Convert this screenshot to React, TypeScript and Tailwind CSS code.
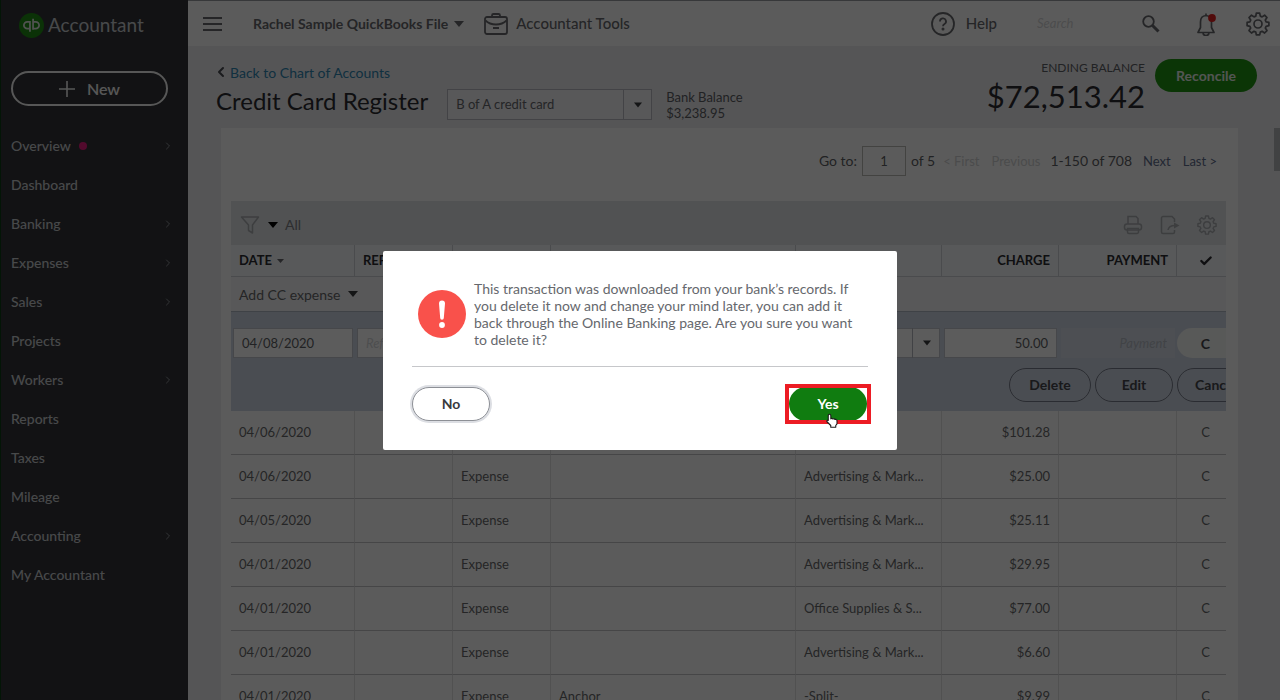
import type { ReactNode } from "react";
import { Check, ChevronLeft, ChevronRight } from "lucide-react";

const navItems = [
  { label: "Overview", dot: true, more: true },
  { label: "Dashboard" },
  { label: "Banking", more: true },
  { label: "Expenses", more: true },
  { label: "Sales", more: true },
  { label: "Projects" },
  { label: "Workers", more: true },
  { label: "Reports" },
  { label: "Taxes" },
  { label: "Mileage" },
  { label: "Accounting", more: true },
  { label: "My Accountant" },
];

const rows = [
  { date: "04/06/2020", type: "", payee: "", account: "", charge: "$101.28" },
  { date: "04/06/2020", type: "Expense", payee: "", account: "Advertising & Mark...", charge: "$25.00" },
  { date: "04/05/2020", type: "Expense", payee: "", account: "Advertising & Mark...", charge: "$25.11" },
  { date: "04/01/2020", type: "Expense", payee: "", account: "Advertising & Mark...", charge: "$29.95" },
  { date: "04/01/2020", type: "Expense", payee: "", account: "Office Supplies & S...", charge: "$77.00" },
  { date: "04/01/2020", type: "Expense", payee: "", account: "Advertising & Mark...", charge: "$6.60" },
  { date: "04/01/2020", type: "Expense", payee: "Anchor", account: "-Split-", charge: "$9.99" },
];

function Caret({ className = "w-[10px]" }: { className?: string }) {
  return (
    <svg viewBox="0 0 10 6" className={`h-[6px] shrink-0 ${className}`} fill="currentColor">
      <path d="M0 0h10L5 6z" />
    </svg>
  );
}

function Gear({ className = "" }: { className?: string }) {
  return (
    <svg viewBox="0 0 24 24" className={className} fill="none" stroke="currentColor" strokeWidth="1.7" strokeLinejoin="round">
      <path d="M10.3 1.2h3.4l.6 2.9 1.8.8 2.5-1.7 2.4 2.4-1.7 2.5.8 1.8 2.8.5v3.3l-2.8.6-.8 1.8 1.7 2.5-2.4 2.4-2.5-1.7-1.8.8-.6 2.8h-3.4l-.5-2.8-1.8-.8-2.5 1.7L3 18.6l1.7-2.5-.8-1.8-2.8-.6v-3.3l2.8-.5.8-1.8L3 5.6l2.500-2.400L8 4.900l1.800-.8z" />
      <circle cx="12" cy="12" r="4" />
    </svg>
  );
}

function Briefcase() {
  return (
    <svg viewBox="0 0 24 23" className="h-[23px] w-6" fill="none" stroke="currentColor" strokeWidth="1.8" strokeLinejoin="round">
      <rect x="1" y="5" width="22" height="17" rx="2" />
      <path d="M8 5V3.500A1.500 1.500 0 0 1 9.500 2h5A1.500 1.500 0 0 1 16 3.500V5" />
      <path d="M1.500 8.500C4.500 11.500 8 12.500 12 12.500s7.500-1 10.500-4M9 16h6" />
    </svg>
  );
}

function Sidebar() {
  return (
    <aside className="w-[188px] shrink-0 border-l border-[#0b3a12] bg-[#333438] px-[10px] text-[#c6c9ce]">
      <div className="flex h-[51px] items-center gap-1 pl-2">
        <svg viewBox="0 0 24 24" className="h-[25px] w-[25px]" fill="none" stroke="#dfe3df" strokeWidth="1.7">
          <circle cx="12" cy="12" r="12" fill="#1f8c14" stroke="none" />
          <path d="M10.500 8.500H8a3.300 3.300 0 0 0 0 6.600h2.500M10.500 7.700v10.300M13.500 15.100H16a3.300 3.300 0 0 0 0-6.600h-2.500M13.500 16V5.500" />
        </svg>
        <span className="text-[19px] font-normal">Accountant</span>
      </div>
      <button className="mt-5 flex h-[35px] w-[157px] items-center justify-center gap-3 rounded-full border-2 border-[#f0f0f0] text-base font-semibold text-[#f0f0f0]">
        <svg viewBox="0 0 16 16" className="h-4 w-4" stroke="currentColor" strokeWidth="1.6">
          <path d="M8 0v16M0 8h16" />
        </svg>
        New
      </button>
      <nav className="mt-5">
        {navItems.map((item) => (
          <a key={item.label} href="#" className="flex h-[39px] items-center text-[14px] font-medium">
            {item.label}
            {item.dot && <span className="ml-2 h-2 w-2 rounded-full bg-[#e31c7e]" />}
            {item.more && <ChevronRight className="mr-1 ml-auto h-3 w-3 text-[#8d9096]" />}
          </a>
        ))}
      </nav>
    </aside>
  );
}

function TopBar() {
  return (
    <header className="flex h-[46px] shrink-0 items-center border-t border-[#9a9ba0] bg-[#fdfdfb] pr-[10px] pl-[15px] text-[#66686d]">
      <button aria-label="Toggle menu" className="flex w-[19px] flex-col gap-1">
        <span className="h-[2px] bg-current" />
        <span className="h-[2px] bg-current" />
        <span className="h-[2px] bg-current" />
      </button>
      <button className="ml-[31px] flex items-center gap-[6px] text-[14px] font-bold">
        Rachel Sample QuickBooks File
        <Caret />
      </button>
      <a href="#" className="ml-5 flex items-center gap-2 text-[15px] font-medium">
        <Briefcase />
        Accountant Tools
      </a>
      <a href="#" className="ml-auto flex items-center gap-[11px] text-[15px] font-medium">
        <svg viewBox="0 0 24 24" className="h-6 w-6" fill="none" stroke="currentColor" strokeWidth="1.8">
          <circle cx="12" cy="12" r="11" />
          <path d="M9 9.500a3 3 0 1 1 4.500 2.500c-1 .6-1.500 1-1.500 2.200" />
          <circle cx="12" cy="17" r=".6" fill="currentColor" />
        </svg>
        Help
      </a>
      <input
        type="text"
        aria-label="Search"
        placeholder="Search"
        className="ml-10 w-[105px] bg-transparent text-[13px] italic placeholder:text-[#d2d3d6]"
      />
      <button aria-label="Run search">
        <svg viewBox="0 0 18 18" className="h-[18px] w-[18px]" fill="none" stroke="currentColor">
          <circle cx="6.500" cy="6.500" r="5.300" strokeWidth="1.800" />
          <path d="M10.500 10.500l6 6" strokeWidth="3" />
        </svg>
      </button>
      <button aria-label="Notifications" className="ml-9">
        <svg viewBox="0 0 22 24" className="h-6 w-[22px]" fill="none" stroke="currentColor" strokeWidth="1.700" strokeLinejoin="round">
          <path d="M10 3.500C6 3.800 4.500 6.500 4.500 10v5.500L2 20.500h16l-2.500-5V10c0-3.500-1.500-6.200-5.500-6.500zM10 3.500V1.500" />
          <path d="M7 20.500a3 3 0 0 0 6 0" />
          <circle cx="16" cy="6" r="3.900" fill="#e02020" stroke="none" />
        </svg>
      </button>
      <button aria-label="Settings" className="ml-[28px]">
        <Gear className="h-6 w-6" />
      </button>
    </header>
  );
}

function PageHead() {
  return (
    <div className="flex h-[82px] items-start pr-[23px] pl-[28px]">
      <div className="pt-4">
        <a href="#" className="flex h-5 items-center text-[14px] text-[#2f85b0]">
          <ChevronLeft className="mr-px -ml-[3px] h-4 w-4 text-[#4a4c51]" strokeWidth={3} />
          Back to Chart of Accounts
        </a>
        <h1 className="text-[24px] leading-[38px] text-[#2b2c30]">Credit Card Register</h1>
      </div>
      <div className="mt-[43px] ml-[19px] flex items-start">
        <div className="relative">
          <select
            aria-label="Account"
            className="h-[31px] w-[205px] appearance-none border border-[#b9bbc1] bg-white/40 px-2 text-[13px] text-[#66686d]"
          >
            <option>B of A credit card</option>
          </select>
          <span className="pointer-events-none absolute inset-y-0 right-0 flex w-[29px] items-center justify-center border-l border-[#b9bbc1] text-[#393a3d]">
            <Caret className="w-2" />
          </span>
        </div>
        <div className="ml-[14px] text-[13px] leading-4 text-[#5d5f64]">
          <p>Bank Balance</p>
          <p>$3,238.95</p>
        </div>
      </div>
      <div className="ml-auto pt-[14px] text-right">
        <p className="text-[12px] leading-4 text-[#5d5f64]">ENDING BALANCE</p>
        <p className="text-[31px] leading-10 text-[#2b2c30]">$72,513.42</p>
      </div>
      <button className="mt-[13px] ml-[10px] h-[33px] w-[102px] rounded-full bg-[#1f9412] text-[14px] font-bold text-[#e6ebe6]">
        Reconcile
      </button>
    </div>
  );
}

function Pager() {
  return (
    <div className="flex items-center justify-end pt-[18px] pr-[9px] pb-[25px] text-[13px] leading-4 text-[#5d5f64]">
      <label htmlFor="page" className="text-[14px] leading-4">
        Go to:
      </label>
      <input id="page" type="text" defaultValue="1" className="ml-[5px] h-[30px] w-11 border border-[#b9bbb4] text-center" />
      <span className="ml-[5px] text-[14px] leading-4">of 5</span>
      <span className="ml-2 text-[#cfd0d2]">&lt; First</span>
      <span className="ml-3 text-[#cfd0d2]">Previous</span>
      <span className="ml-[10px] text-[14px] leading-4">1-150 of 708</span>
      <a href="#" className="ml-[11px] text-[#5f6c8c]">Next</a>
      <a href="#" className="ml-3 text-[#5f6c8c]">Last &gt;</a>
    </div>
  );
}

function Toolbar() {
  return (
    <div className="flex h-11 items-center bg-[#dfe3e5] px-[9px] pt-1 text-[#a9abb0]">
      <button aria-label="Filter" className="flex items-center gap-2">
        <svg viewBox="0 0 20 20" className="h-5 w-5" fill="none" stroke="currentColor" strokeWidth="1.500" strokeLinejoin="round">
          <path d="M1.500 2h17L12.500 10v8l-4-2.500V10z" />
        </svg>
        <Caret className="w-[10px] text-black" />
      </button>
      <span className="ml-[7px] text-[14px] leading-4 text-[#7c7e84]">All</span>
      <button aria-label="Print" className="ml-auto">
        <svg viewBox="0 0 20 20" className="h-5 w-5" fill="none" stroke="currentColor" strokeWidth="1.500">
          <path d="M5 9V1.500h8l2 2V9" />
          <rect x="1.500" y="9" width="17" height="6" rx="2.500" />
          <path d="M4.500 13.500h11v3.500a1.500 1.500 0 0 1-1.500 1.500H6A1.500 1.500 0 0 1 4.500 17z" />
        </svg>
      </button>
      <button aria-label="Export" className="ml-[17px]">
        <svg viewBox="0 0 20 20" className="h-5 w-5" fill="none" stroke="currentColor" strokeWidth="1.500">
          <path d="M14.500 7V4l-2.500-2.500H3A1.500 1.500 0 0 0 1.500 3v14A1.500 1.500 0 0 0 3 18.500h10a1.500 1.500 0 0 0 1.500-1.500v-2" />
          <path d="M8 15c.5-3 3-4.500 7-4.500" />
          <path d="M14 7.500l5.500 3-5.500 3z" fill="currentColor" stroke="none" />
        </svg>
      </button>
      <button aria-label="Table settings" className="ml-[17px]">
        <Gear className="h-5 w-5" />
      </button>
    </div>
  );
}

function HeadCell({ className = "px-2", children }: { className?: string; children?: ReactNode }) {
  return (
    <th className={`h-8 border-r border-b border-[#cdd0d5] text-[13px] font-bold last:border-r-0 ${className}`}>
      {children}
    </th>
  );
}

function Cell({ className = "px-2", children }: { className?: string; children?: ReactNode }) {
  return (
    <td className={`h-11 border-r border-b border-r-[#dfdfdf] border-b-[#c2c3c5] last:border-r-0 ${className}`}>
      {children}
    </td>
  );
}

const field = "h-[30px] w-full border border-[#c3c6cc] bg-white px-2 text-[#5d5f64]";
const pill = "h-[34px] shrink-0 rounded-full border border-[#767b8a] text-[14px] font-bold text-[#45474d]";

function Register() {
  return (
    <table className="w-full table-fixed border-separate border-spacing-0 text-left text-[13px] text-[#66686b]">
      <colgroup>
        <col className="w-[124px]" />
        <col className="w-[98px]" />
        <col className="w-[98px]" />
        <col />
        <col className="w-[146px]" />
        <col className="w-[117px]" />
        <col className="w-[118px]" />
        <col className="w-[49px]" />
      </colgroup>
      <thead className="bg-[#f4f5f8] text-[#2b2c30]">
        <tr>
          <HeadCell>
            <span className="flex items-center gap-[5px]">
              DATE <Caret className="w-[7px] text-[#66686d]" />
            </span>
          </HeadCell>
          <HeadCell>REF NO.</HeadCell>
          <HeadCell />
          <HeadCell />
          <HeadCell />
          <HeadCell className="px-2 text-right">CHARGE</HeadCell>
          <HeadCell className="px-2 text-right">PAYMENT</HeadCell>
          <HeadCell className="pl-2">
            <Check aria-label="Cleared" className="mx-auto h-[14px] w-[14px]" strokeWidth={4} />
          </HeadCell>
        </tr>
      </thead>
      <tbody>
        <tr>
          <td colSpan={8} className="h-[34px] bg-[#f4f4f5] px-2">
            <button className="flex items-center gap-2 text-[14px]">
              Add CC expense
              <Caret className="w-[10px] text-[#393a3d]" />
            </button>
          </td>
        </tr>
        <tr className="bg-[#ced6e2]">
          <td className="border-t border-[#b0b6c2] px-[2px] pt-4">
            <input aria-label="Date" type="text" defaultValue="04/08/2020" className={field} />
          </td>
          <td className="border-t border-[#b0b6c2] px-[2px] pt-4">
            <input aria-label="Ref no." type="text" placeholder="Ref No." className={`${field} italic placeholder:text-[#d6d7da]`} />
          </td>
          <td className="border-t border-[#b0b6c2]" />
          <td className="border-t border-[#b0b6c2]" />
          <td className="border-t border-[#b0b6c2] px-[2px] pt-4">
            <div className="relative">
              <select aria-label="Category" className={`${field} block appearance-none`}>
                <option>Supplies</option>
              </select>
              <span className="pointer-events-none absolute inset-y-0 right-0 flex w-[28px] items-center justify-center border-l border-[#b4b7be] text-[#393a3d]">
                <Caret className="w-2" />
              </span>
            </div>
          </td>
          <td className="border-t border-[#b0b6c2] px-[2px] pt-4">
            <input aria-label="Charge" type="text" defaultValue="50.00" className={`${field} text-right`} />
          </td>
          <td className="border-t border-[#b0b6c2] px-[2px] pt-4">
            <input
              aria-label="Payment"
              type="text"
              placeholder="Payment"
              disabled
              className="h-[30px] w-full bg-white/15 px-2 text-right italic placeholder:text-[#b4b9c3]"
            />
          </td>
          <td className="border-t border-[#b0b6c2] pt-4">
            <button className="h-[30px] w-full rounded-l-full bg-[#f4f5f4] pl-2 text-[14px] font-bold text-[#45474d]">C</button>
          </td>
        </tr>
        <tr className="bg-[#ced6e2]">
          <td colSpan={8} className="h-[53px] overflow-hidden">
            <div className="-mr-[29px] flex justify-end gap-1">
              <button className={`${pill} w-[82px]`}>Delete</button>
              <button className={`${pill} w-[78px]`}>Edit</button>
              <button className={`${pill} w-[78px]`}>Cancel</button>
            </div>
          </td>
        </tr>
        {rows.map((row, i) => (
          <tr key={i}>
            <Cell>{row.date}</Cell>
            <Cell />
            <Cell>{row.type}</Cell>
            <Cell>{row.payee}</Cell>
            <Cell className="px-2 whitespace-nowrap">{row.account}</Cell>
            <Cell className="px-2 text-right">{row.charge}</Cell>
            <Cell />
            <Cell className="pl-2 text-center">C</Cell>
          </tr>
        ))}
      </tbody>
    </table>
  );
}

function HandCursor() {
  return (
    <svg
      viewBox="0 0 16 18"
      className="pointer-events-none absolute top-[26px] left-[36px] h-[15px] w-[14px]"
      fill="#fff"
      stroke="#1a1a1a"
      strokeWidth="1.300"
      strokeLinejoin="round"
    >
      <path d="M5 1.500c1.200 0 1.600.8 1.600 1.800V7c.8-.8 2-.6 2.500.3.800-.6 2-.4 2.400.5 1-.5 2.500 0 2.500 1.500V13l-1.500 2v2H6.500v-2L2 10.500c-.8-1 .2-2.400 1.500-1.500V3.300c0-1 .4-1.800 1.500-1.800z" />
    </svg>
  );
}

function DeleteDialog() {
  return (
    <div className="fixed inset-0 flex items-center justify-center bg-black/64">
      <div role="dialog" aria-modal="true" aria-label="Delete transaction" className="w-[514px] rounded-[2px] bg-white px-[29px] py-[29px]">
        <div className="flex items-center gap-2 border-b border-[#c6c7ca] pb-[18px] pl-[6px]">
          <svg viewBox="0 0 48 48" className="h-12 w-12 shrink-0">
            <circle cx="24" cy="24" r="24" fill="#f9514b" />
            <path d="M21 13.500a3 3 0 0 1 6 0L25.800 28a1.800 1.800 0 0 1-3.600 0z" fill="#fff" />
            <circle cx="24" cy="35" r="2.900" fill="#fff" />
          </svg>
          <p className="text-[14px] leading-[17px] text-[#66686d]">
            This transaction was downloaded from your bank’s records. If you delete it now and change your mind later,
            you can add it back through the Online Banking page. Are you sure you want to delete it?
          </p>
        </div>
        <div className="mt-5 flex items-center justify-between pr-px">
          <button className="h-[34px] w-[78px] rounded-full border border-[#8d9096] bg-white text-[14px] font-bold text-[#393a3d] shadow-[0_0_0_2px_#dcdee3]">
            No
          </button>
          <div className="relative">
            <button className="block h-[34px] w-[78px] rounded-full bg-[#107c10] text-[14px] font-bold text-white">Yes</button>
            <span className="pointer-events-none absolute -inset-x-1 -inset-y-[3px] border-4 border-[#ec1c24]" />
            <HandCursor />
          </div>
        </div>
      </div>
    </div>
  );
}

export default function App() {
  return (
    <div className="flex h-screen overflow-hidden bg-[#ebebef] font-['Lato','Liberation_Sans',sans-serif]">
      <Sidebar />
      <div className="flex min-w-0 flex-1 flex-col">
        <TopBar />
        <PageHead />
        <div className="flex min-h-0 flex-1">
          <main className="mr-9 ml-[33px] min-w-0 flex-1 overflow-hidden bg-[#fdfdfb] pr-3 pl-[10px]">
            <Pager />
            <div className="overflow-hidden">
              <Toolbar />
              <Register />
            </div>
          </main>
          <div className="h-[43px] w-[6px] bg-[#b4b6ba]" />
        </div>
      </div>
      <DeleteDialog />
    </div>
  );
}
